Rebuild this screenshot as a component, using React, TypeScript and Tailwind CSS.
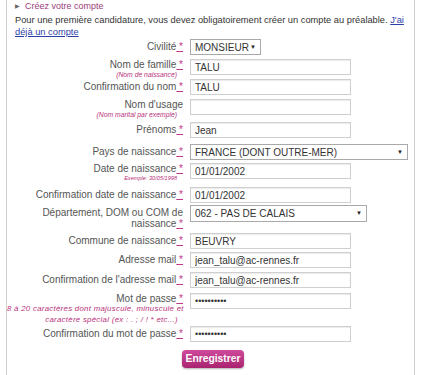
import React from "react";

const Req = () => (
  <span className="text-[#c2358a] underline decoration-[#c2358a]"> *</span>
);

function Label({
  text,
  sub,
  subLines,
  subSize = "text-[6.8px]",
}: {
  text: React.ReactNode;
  sub?: string;
  subLines?: string[];
  subSize?: string;
}) {
  const hasSub = !!sub || !!subLines;
  return (
    <div className="w-[177px] shrink-0 text-right pr-[1px]">
      <div
        className={`text-[10px] text-[#555] whitespace-nowrap ${
          hasSub ? "leading-[10px] pt-[1px]" : "leading-[11px] pt-[2px]"
        }`}
      >
        {text}
      </div>
      {sub && (
        <div className={`${subSize} leading-[9px] italic text-[#b8307a] whitespace-nowrap pr-[6px]`}>{sub}</div>
      )}
      {subLines &&
        subLines.map((s, i) => (
          <div
            key={s}
            className={`text-[7.8px] tracking-[0.3px] leading-[10.5px] italic text-[#b8307a] whitespace-nowrap ${
              i === 1 ? "pr-[5px]" : ""
            }`}
          >
            {s}
          </div>
        ))}
    </div>
  );
}

function TextBox({ value, password = false }: { value: string; password?: boolean }) {
  return (
    <input
      readOnly
      type="text"
      value={value}
      className={`w-[161px] h-[16px] border border-[#cfcfcf] shadow-[inset_0_1px_1px_rgba(0,0,0,0.08)] bg-white px-[4px] text-[#333] outline-none ${
        password ? "text-[9px]" : "text-[10px]"
      }`}
      style={{ fontFamily: "'Liberation Sans', Arial, sans-serif" }}
    />
  );
}

function Select({ value, w, h = "h-[16px]" }: { value: string; w: string; h?: string }) {
  return (
    <div className={`${w} ${h} border border-[#a9a9a9] bg-white flex items-center justify-between px-[4px] text-[10px] text-[#333]`}>
      <span>{value}</span>
      <span className="text-[6px] text-[#222]">▼</span>
    </div>
  );
}

function Row({ h, children }: { h: string; children: React.ReactNode }) {
  return <div className={`flex items-start gap-[6px] ${h}`}>{children}</div>;
}

export default function App() {
  return (
    <div
      className="w-[421px] h-[375px] bg-white overflow-hidden"
      style={{ fontFamily: "'Liberation Sans', Arial, sans-serif" }}
    >
      <div className="mx-[6px] h-full border-x border-[#cfcfcf] pl-[8px] pr-[3px]">
        {/* Title */}
        <div className="flex items-center gap-[5px] text-[9px] leading-[12px] text-[#9c3d7c]">
          <span className="text-[6px] text-[#666]">▶</span>
          <span>Créez votre compte</span>
        </div>
        <p className="text-[9.3px] leading-[12px] text-[#333] mt-[2px]">
          Pour une première candidature, vous devez obligatoirement créer un compte au préalable.{" "}
          <a className="text-[#2c3fa8] underline">J'ai</a>{" "}
          <a className="text-[#2c3fa8] underline">déjà un compte</a>
        </p>

        <div className="mt-[1px] -ml-[8px]">
          <Row h="h-[20px]">
            <Label text={<>Civilité<Req /></>} />
            <Select value="MONSIEUR" w="w-[71px]" />
          </Row>
          <Row h="h-[20px]">
            <Label text={<>Nom de famille<Req /></>} sub="(Nom de naissance)" />
            <TextBox value="TALU" />
          </Row>
          <Row h="h-[20px]">
            <Label text={<>Confirmation du nom<Req /></>} />
            <TextBox value="TALU" />
          </Row>
          <Row h="h-[23px]">
            <Label text="Nom d'usage" sub="(Nom marital par exemple)" />
            <TextBox value="" />
          </Row>
          <Row h="h-[22px]">
            <Label text={<>Prénoms<Req /></>} />
            <TextBox value="Jean" />
          </Row>
          <Row h="h-[19px]">
            <Label text={<>Pays de naissance<Req /></>} />
            <Select value="FRANCE (DONT OUTRE-MER)" w="w-[218px]" />
          </Row>
          <Row h="h-[24px]">
            <Label text={<>Date de naissance<Req /></>} sub="Exemple: 30/05/1998" subSize="text-[5.6px]" />
            <TextBox value="01/01/2002" />
          </Row>
          <Row h="h-[18px]">
            <Label text={<>Confirmation date de naissance<Req /></>} />
            <TextBox value="01/01/2002" />
          </Row>
          <Row h="h-[28px]">
            <Label
              text={
                <>
                  Département, DOM ou COM de
                  <br />
                  naissance<Req />
                </>
              }
            />
            <Select value="062 - PAS DE CALAIS" w="w-[177px]" h="h-[17px]" />
          </Row>
          <Row h="h-[19px]">
            <Label text={<>Commune de naissance<Req /></>} />
            <TextBox value="BEUVRY" />
          </Row>
          <Row h="h-[20px]">
            <Label text={<>Adresse mail<Req /></>} />
            <TextBox value="jean_talu@ac-rennes.fr" />
          </Row>
          <Row h="h-[21px]">
            <Label text={<>Confirmation de l'adresse mail<Req /></>} />
            <TextBox value="jean_talu@ac-rennes.fr" />
          </Row>
          <Row h="h-[33px]">
            <Label
              text={<>Mot de passe<Req /></>}
              subLines={["8 à 20 caractères dont majuscule, minuscule et", "caractère spécial (ex : . ; / ! * etc...)"]}
            />
            <TextBox password value="••••••••••" />
          </Row>
          <Row h="h-[24px]">
            <Label text={<>Confirmation du mot de passe<Req /></>} />
            <TextBox password value="••••••••••" />
          </Row>
        </div>

        <div className="flex justify-center -ml-[8px] pl-[8px]">
          <button className="h-[18px] px-[4px] rounded-[4px] bg-gradient-to-b from-[#cf4a9c] to-[#a8226f] text-white text-[10.3px] font-bold shadow-[0_1px_2px_rgba(0,0,0,0.3)]">
            Enregistrer
          </button>
        </div>
      </div>
    </div>
  );
}
